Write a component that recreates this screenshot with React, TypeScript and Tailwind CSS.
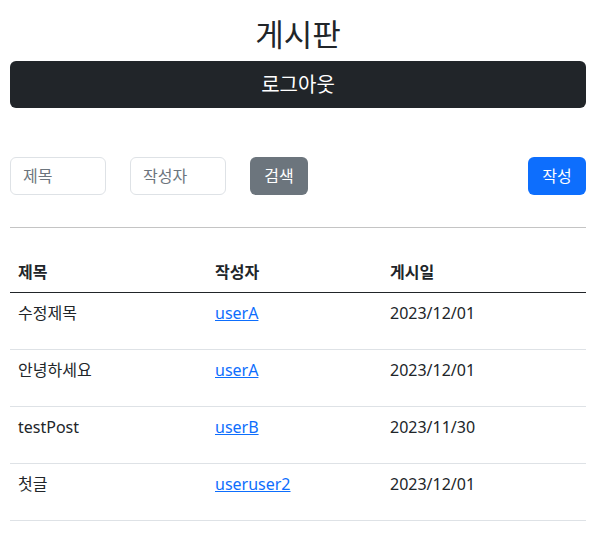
import React from 'react';

const POSTS = [
  { title: '수정제목', author: 'userA', date: '2023/12/01' },
  { title: '안녕하세요', author: 'userA', date: '2023/12/01' },
  { title: 'testPost', author: 'userB', date: '2023/11/30' },
  { title: '첫글', author: 'useruser2', date: '2023/12/01' },
];

export default function App() {
  return (
    <div className="min-h-[550px] bg-white text-[#212529] font-['Noto_Sans','Noto_Sans_CJK_KR',sans-serif] text-base">
      <div className="w-[576px] ml-[10px] pt-4">
        <h1 className="text-[31px] leading-[37px] text-center font-normal mb-2">게시판</h1>
        <button className="w-full h-[47px] rounded-md bg-[#212529] text-white text-[20px] flex items-center justify-center">
          로그아웃
        </button>

        <div className="mt-[49px] flex items-center h-[38px]">
          <input
            placeholder="제목"
            className="w-[96px] h-[38px] border border-[#dee2e6] rounded-md px-3 placeholder:text-[#6c757d] outline-none"
          />
          <input
            placeholder="작성자"
            className="ml-6 w-[96px] h-[38px] border border-[#dee2e6] rounded-md px-3 placeholder:text-[#6c757d] outline-none"
          />
          <button className="ml-6 w-[58px] h-[38px] rounded-md bg-[#6c757d] text-white">검색</button>
          <button className="ml-auto w-[58px] h-[38px] rounded-md bg-[#0d6efd] text-white">작성</button>
        </div>

        <hr className="mt-[32px] border-0 border-t border-[#c4c4c4]" />

        <table className="mt-6 w-full table-fixed border-collapse">
          <colgroup>
            <col className="w-[197px]" />
            <col className="w-[175px]" />
            <col />
          </colgroup>
          <thead>
            <tr className="h-[40px] border-b border-[#212529]">
              <th className="px-2 text-left font-bold align-middle">제목</th>
              <th className="px-2 text-left font-bold align-middle">작성자</th>
              <th className="px-2 text-left font-bold align-middle">게시일</th>
            </tr>
          </thead>
          <tbody>
            {POSTS.map((p, i) => (
              <tr key={i} className="h-[57px] border-b border-[#dee2e6]">
                <td className="px-2 pt-2 pb-0 align-top leading-6">{p.title}</td>
                <td className="px-2 pt-2 pb-0 align-top leading-6">
                  <a href="#" className="text-[#0d6efd] underline">{p.author}</a>
                </td>
                <td className="px-2 pt-2 pb-0 align-top leading-6">{p.date}</td>
              </tr>
            ))}
          </tbody>
        </table>
      </div>
    </div>
  );
}
